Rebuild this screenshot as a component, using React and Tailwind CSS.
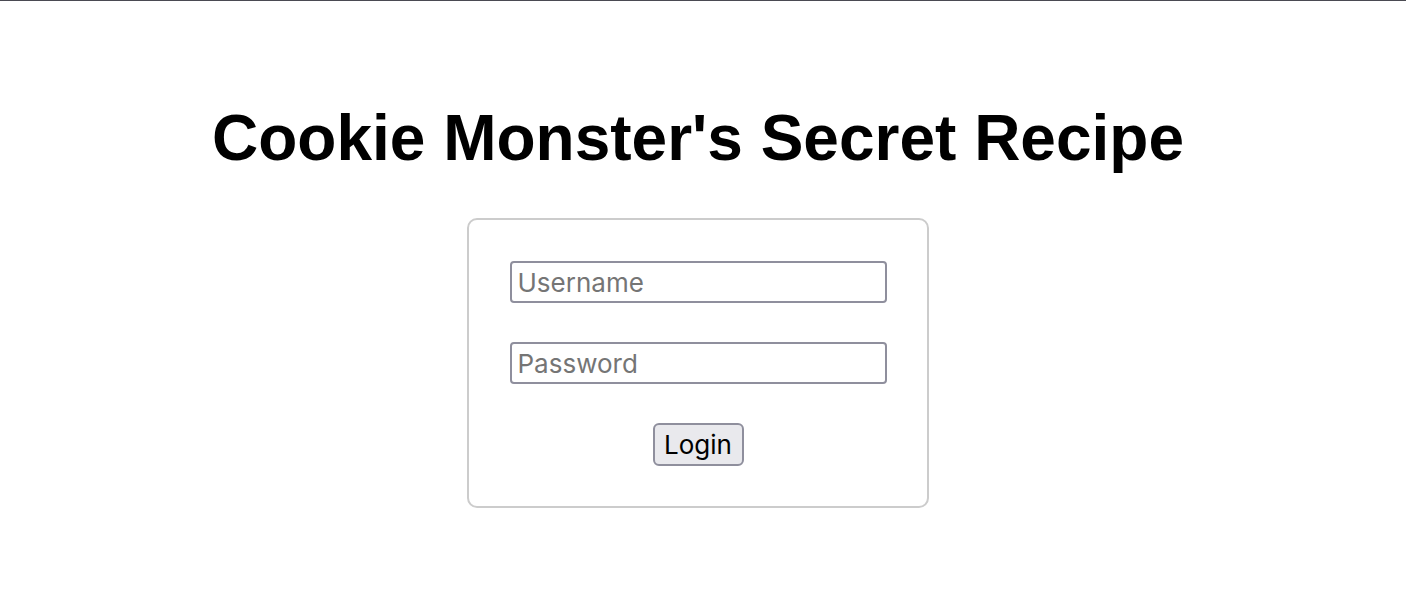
export default function App() {
    return (
        <div className="min-h-[590px] w-full bg-white border-t border-[#4a4a52] flex flex-col items-center pr-[10px]" style={{ fontFamily: '"Liberation Sans", Arial, sans-serif' }}>
            {/* Title */}
            <h1 className="mt-[100px] text-[64px] leading-[74px] font-bold text-black">
                Cookie Monster's Secret Recipe
            </h1>

            {/* Login card */}
            <form
                onSubmit={(e) => e.preventDefault()}
                className="mt-[43px] w-[462px] border-2 border-[#cccccc] rounded-[10px] px-[40px] pt-[41px] pb-[40px] flex flex-col items-center"
            >
                <input
                    type="text"
                    placeholder="Username"
                    className="w-[377px] h-[42px] border-2 border-[#8f8f9d] rounded-[4px] px-[6px] text-[26px] text-black placeholder-[#757575] outline-none font-['Inter',sans-serif]"
                />
                <input
                    type="password"
                    placeholder="Password"
                    className="mt-[39px] w-[377px] h-[42px] border-2 border-[#8f8f9d] rounded-[4px] px-[6px] text-[26px] text-black placeholder-[#757575] outline-none font-['Inter',sans-serif]"
                />
                <button
                    type="submit"
                    className="mt-[39px] w-[91px] h-[43px] border-2 border-[#8f8f9d] rounded-[6px] bg-[#e9e9ed] text-[26px] text-black font-['Inter',sans-serif]"
                >
                    Login
                </button>
            </form>
        </div>
    );
}
